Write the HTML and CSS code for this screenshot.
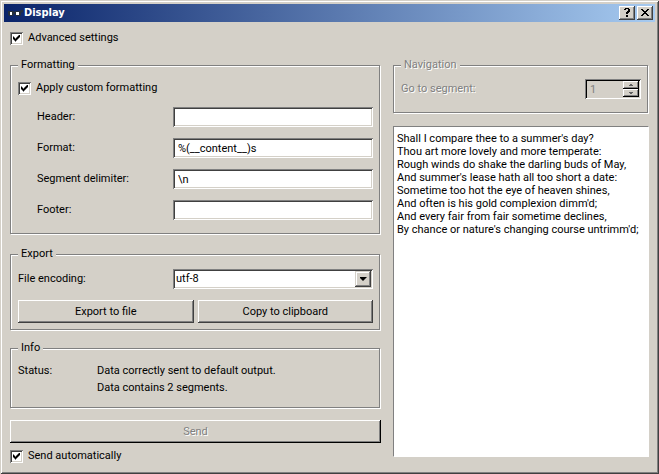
FILE: index.html
```html
<!DOCTYPE html>
<html lang="en">
<head>
<meta charset="utf-8">
<title>Display</title>
<link rel="stylesheet" href="styles.css">
</head>
<body>
<div class="window">
  <header class="titlebar">
    <svg class="app-icon" width="16" height="16" viewBox="0 0 16 16" aria-hidden="true">
      <path d="M0 6h6v1h1V6h5l1-1h2v2l-2 1v2l-1 1H8L7 9H6l-1 2H1L0 9z" fill="#26303c"/>
      <path d="M2 7h2v3H2zM8 7h3v3H8z" fill="#fff"/>
    </svg>
    <h1 class="title">Display</h1>
    <button class="caption-button" type="button" aria-label="Help">
      <svg width="12" height="10" viewBox="0 0 12 10" shape-rendering="crispEdges"><path d="M4 0h4v1h1v3h-1v1h-1v1h-2v-2h1v-1h1v-2h-2v1h-2v-1h1zM5 7h2v2h-2z"/></svg>
    </button>
    <button class="caption-button" type="button" aria-label="Close">
      <svg width="12" height="10" viewBox="0 0 12 10" shape-rendering="crispEdges"><path d="M2 1h2v1h1v1h2v-1h1v-1h2v1h-1v1h-1v1h-1v1h1v1h1v1h1v1h-2v-1h-1v-1h-2v1h-1v1h-2v-1h1v-1h1v-1h1v-1h-1v-1h-1v-1h-1z"/></svg>
    </button>
  </header>
  <main class="content">
    <form class="controls">
      <label class="check"><input type="checkbox" checked>Advanced settings</label>

      <fieldset class="group formatting">
        <legend>Formatting</legend>
        <label class="check"><input type="checkbox" checked>Apply custom formatting</label>
        <div class="fields">
          <label for="header">Header:</label><input class="field" id="header" type="text">
          <label for="format">Format:</label><input class="field" id="format" type="text" value="%(__content__)s">
          <label for="delimiter">Segment delimiter:</label><input class="field" id="delimiter" type="text" value="\n">
          <label for="footer">Footer:</label><input class="field" id="footer" type="text">
        </div>
      </fieldset>

      <fieldset class="group export">
        <legend>Export</legend>
        <div class="encoding">
          <label for="encoding">File encoding:</label>
          <div class="combo">
            <select id="encoding"><option>utf-8</option></select>
            <span class="combo-arrow"></span>
          </div>
        </div>
        <div class="actions">
          <button class="button" type="button">Export to file</button>
          <button class="button" type="button">Copy to clipboard</button>
        </div>
      </fieldset>

      <fieldset class="group info">
        <legend>Info</legend>
        <div class="status">
          <span>Status:</span>
          <p>Data correctly sent to default output.<br>Data contains 2 segments.</p>
        </div>
      </fieldset>

      <button class="button send" type="button" disabled>Send</button>
      <label class="check"><input type="checkbox" checked>Send automatically</label>
    </form>

    <section class="viewer">
      <fieldset class="group navigation" disabled>
        <legend>Navigation</legend>
        <div class="goto">
          <label for="segment">Go to segment:</label>
          <div class="spinner">
            <input id="segment" type="number" value="1">
            <div class="steps">
              <button type="button" aria-label="Next segment"><span class="up"></span></button>
              <button type="button" aria-label="Previous segment"><span class="down"></span></button>
            </div>
          </div>
        </div>
      </fieldset>
      <textarea class="text" aria-label="Text" readonly>Shall I compare thee to a summer's day?
Thou art more lovely and more temperate:
Rough winds do shake the darling buds of May,
And summer's lease hath all too short a date:
Sometime too hot the eye of heaven shines,
And often is his gold complexion dimm'd;
And every fair from fair sometime declines,
By chance or nature's changing course untrimm'd;</textarea>
    </section>
  </main>
</div>
</body>
</html>
```
FILE: styles.css
```css
:root {
  --face: #d4d0c8;
  --shadow: #808080;
  --dark: #404040;
  --font: Roboto, "Liberation Sans", sans-serif;
}

* { box-sizing: border-box; }

body {
  margin: 0;
  background: var(--face);
  color: #000;
  font: 11px/14px var(--font);
}

button, input, select, textarea {
  margin: 0;
  padding: 0;
  border: 0;
  border-radius: 0;
  outline: 0;
  background: none;
  color: inherit;
  font: inherit;
  appearance: none;
}

.window {
  display: flex;
  flex-direction: column;
  min-height: 100vh;
  padding: 4px;
  background: var(--face);
  box-shadow: inset 1px 1px var(--face), inset -1px -1px var(--dark),
    inset 2px 2px #fff, inset -2px -2px var(--shadow);
}

.titlebar {
  display: flex;
  align-items: center;
  gap: 2px;
  height: 18px;
  padding: 0 2px 0 4px;
  background: linear-gradient(90deg, #0a246a, #a6caf0);
  color: #fff;
}

.title {
  flex: 1;
  margin: 0 0 0 -2px;
  font: bold 11px/14px "DejaVu Sans Condensed", sans-serif;
}

.caption-button {
  display: grid;
  place-items: center;
  width: 16px;
  height: 14px;
  background: var(--face);
  box-shadow: inset -1px -1px var(--dark), inset 1px 1px #fff,
    inset -2px -2px var(--shadow);
}

.content {
  display: grid;
  grid-template-columns: 371fr 256fr;
  gap: 12px;
  flex: 1;
  padding: 9px 6px 7px;
}

.controls {
  display: flex;
  flex-direction: column;
}

.check {
  display: flex;
  align-items: center;
  gap: 5px;
}

.check input {
  width: 13px;
  height: 13px;
  padding: 3px;
  background: #fff;
  box-shadow: inset 1px 1px var(--shadow), inset -1px -1px #fff,
    inset 2px 2px var(--dark), inset -2px -2px var(--face);
}

.check input:checked::before {
  content: "";
  display: block;
  width: 7px;
  height: 7px;
  background: #000;
  clip-path: polygon(0 2px, 1px 2px, 1px 3px, 2px 3px, 2px 4px, 3px 4px, 3px 3px, 4px 3px, 4px 2px, 5px 2px, 5px 1px, 6px 1px, 6px 0, 7px 0, 7px 3px, 6px 3px, 6px 4px, 5px 4px, 5px 5px, 4px 5px, 4px 6px, 3px 6px, 3px 7px, 2px 7px, 2px 6px, 1px 6px, 1px 5px, 0 5px);
}

.group {
  min-width: 0;
  margin: 0 1px 0 0;
  padding: 0 6px 0 7px;
  border: 1px solid var(--shadow);
  box-shadow: 1px 1px #fff, inset 1px 1px #fff;
}

.group legend {
  padding: 0 3px;
  background: var(--face);
}

.formatting {
  margin-top: 13px;
  padding-top: 9px;
  padding-bottom: 13px;
}

.fields {
  display: grid;
  grid-template-columns: 136px 1fr;
  align-items: center;
  row-gap: 11px;
  margin-top: 12px;
  padding-left: 19px;
}

.field, .combo, .spinner {
  width: 100%;
  height: 20px;
  background: #fff;
  box-shadow: inset 1px 1px var(--shadow), inset -1px -1px #fff,
    inset 2px 2px var(--dark), inset -2px -2px var(--face);
}

.field { padding: 1px 5px 0; }

.export {
  margin-top: 13px;
  padding-top: 8px;
  padding-bottom: 6px;
}

.encoding {
  display: grid;
  grid-template-columns: 155px 1fr;
  align-items: center;
}

.combo {
  position: relative;
  padding: 2px;
}

.combo select {
  display: block;
  width: 100%;
  height: 16px;
  padding-left: 1px;
}

.combo-arrow {
  position: absolute;
  top: 2px;
  right: 2px;
  display: grid;
  place-items: center;
  width: 16px;
  height: 16px;
  background: var(--face);
  box-shadow: inset -1px -1px var(--dark), inset 1px 1px var(--face),
    inset -2px -2px var(--shadow), inset 2px 2px #fff;
  pointer-events: none;
}

.combo-arrow::before {
  content: "";
  width: 7px;
  height: 4px;
  background: #000;
  clip-path: polygon(0 0, 7px 0, 7px 1px, 6px 1px, 6px 2px, 5px 2px, 5px 3px, 4px 3px, 4px 4px, 3px 4px, 3px 3px, 2px 3px, 2px 2px, 1px 2px, 1px 1px, 0 1px);
}

.actions {
  display: grid;
  grid-template-columns: 1fr 1fr;
  gap: 4px;
  margin-top: 11px;
}

.button {
  height: 23px;
  background: var(--face);
  box-shadow: inset -1px -1px var(--dark), inset 1px 1px #fff,
    inset -2px -2px var(--shadow);
}

.info {
  margin-top: 11px;
  padding-top: 7px;
  padding-bottom: 11px;
}

.status {
  display: grid;
  grid-template-columns: 79px 1fr;
  line-height: 17px;
}

.status p { margin: 0; }

.send {
  margin: 12px 0 6px;
  box-shadow: inset -1px -1px #000, inset 1px 1px #fff,
    inset -2px -2px var(--shadow);
}

.button:disabled, .navigation {
  color: var(--shadow);
  text-shadow: 1px 1px #fff;
}

.viewer {
  display: flex;
  flex-direction: column;
  padding: 27px 0 6px;
}

.navigation {
  padding-top: 7px;
  padding-bottom: 13px;
}

.goto {
  display: flex;
  align-items: center;
  justify-content: space-between;
}

.spinner {
  display: flex;
  width: 56px;
  padding: 2px;
  background: var(--face);
  box-shadow: inset 1px 1px var(--shadow), inset -1px -1px #fff,
    inset 2px 2px #000, inset -2px -2px var(--face);
}

.spinner input {
  flex: 1;
  min-width: 0;
  padding: 1px 0 0 3px;
  text-shadow: none;
  appearance: textfield;
}

.steps {
  display: flex;
  flex-direction: column;
  width: 16px;
}

.steps button {
  display: grid;
  place-items: center;
  height: 8px;
  box-shadow: inset -1px -1px #000, inset 1px 1px #fff,
    inset -2px -2px var(--shadow);
}

.up, .down {
  width: 4px;
  height: 2px;
  background: #606060;
}

.up { clip-path: polygon(1px 0, 3px 0, 3px 1px, 4px 1px, 4px 2px, 0 2px, 0 1px, 1px 1px); }
.down { clip-path: polygon(0 0, 4px 0, 4px 1px, 3px 1px, 3px 2px, 1px 2px, 1px 1px, 0 1px); }

.text {
  flex: 1;
  margin-top: 13px;
  padding: 5px 3px;
  border: 1px solid;
  border-color: var(--shadow) #fff #fff var(--shadow);
  background: #fff;
  line-height: 13px;
  white-space: pre;
  overflow: auto;
  resize: none;
}
```
